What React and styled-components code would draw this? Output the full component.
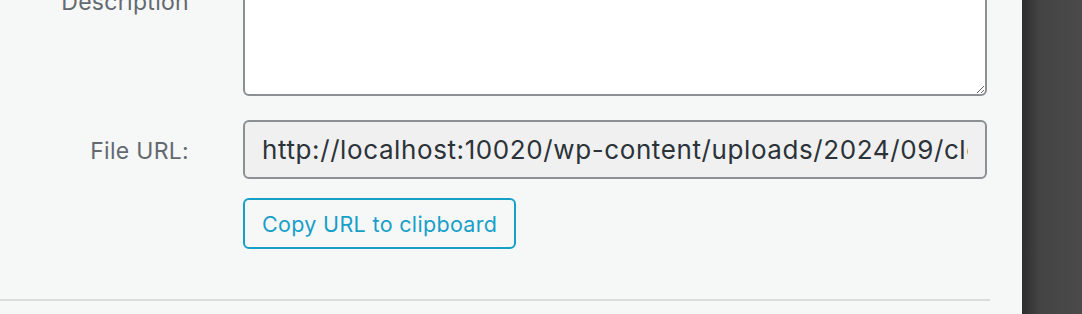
import React from "react";
import styled, { createGlobalStyle } from "styled-components";

const Global = createGlobalStyle`
  html, body { margin: 0; padding: 0; }
  body {
    background: #f6f7f7;
    font-family: Inter, "Noto Sans", sans-serif;
    overflow: hidden;
  }
`;

const Frame = styled.div`
  display: flex;
  width: 1082px;
  height: 314px;
  overflow: hidden;
`;

const Panel = styled.div`
  flex: 0 0 1022px;
  background: #f6f7f7;
  display: flex;
  flex-direction: column;
`;

const Content = styled.div`
  margin-top: -40px;
  padding-right: 35px;
  display: flex;
  flex-direction: column;
  gap: 24px;
`;

const Setting = styled.div`
  display: grid;
  grid-template-columns: 189px 744px;
  column-gap: 54px;
  align-items: start;
`;

const Label = styled.label`
  text-align: right;
  color: #646970;
  font-size: 23px;
  letter-spacing: 0.3px;
  line-height: 28px;
  white-space: nowrap;
  padding-top: ${(p) => p.$pad || 0}px;
`;

const TextArea = styled.textarea`
  box-sizing: border-box;
  width: 744px;
  height: 136px;
  margin: 0;
  display: block;
  background: #fff;
  border: 2px solid #8c8f94;
  border-radius: 6px;
  resize: both;
  font: inherit;
`;

const Field = styled.div`
  display: flex;
  flex-direction: column;
  align-items: flex-start;
  gap: 19px;
`;

const UrlInput = styled.input`
  box-sizing: border-box;
  width: 744px;
  height: 59px;
  margin: 0;
  padding: 0 17px;
  background: #f0f0f1;
  border: 2px solid #8c8f94;
  border-radius: 6px;
  color: #2c3338;
  font-family: Inter, "Noto Sans", sans-serif;
  font-size: 26px;
  letter-spacing: 0.6px;
  outline: none;
`;

const CopyButton = styled.button`
  box-sizing: border-box;
  height: 51px;
  padding: 0 17px;
  background: #f6f7f7;
  border: 2px solid #16a0c8;
  border-radius: 6px;
  color: #16a0c8;
  font-family: Inter, "Noto Sans", sans-serif;
  font-size: 21.5px;
  letter-spacing: 0.33px;
  white-space: nowrap;
  cursor: pointer;
`;

const Divider = styled.hr`
  margin: 50px 0 0 0;
  width: 990px;
  border: 0;
  height: 2px;
  background: #dcdcde;
`;

const Side = styled.div`
  flex: 1;
  background: linear-gradient(to right, #2e2e2e 0px, #444 18px, #4a4a4a 60px);
`;

export default function App() {
  return (
    <>
      <Global />
      <Frame>
        <Panel>
          <Content>
            <Setting>
              <Label $pad={28}>Description</Label>
              <TextArea />
            </Setting>
            <Setting>
              <Label $pad={17}>File URL:</Label>
              <Field>
                <UrlInput
                  readOnly
                  value="http://localhost:10020/wp-content/uploads/2024/09/cloud-image.jpg"
                />
                <CopyButton>Copy URL to clipboard</CopyButton>
              </Field>
            </Setting>
          </Content>
          <Divider />
        </Panel>
        <Side />
      </Frame>
    </>
  );
}
